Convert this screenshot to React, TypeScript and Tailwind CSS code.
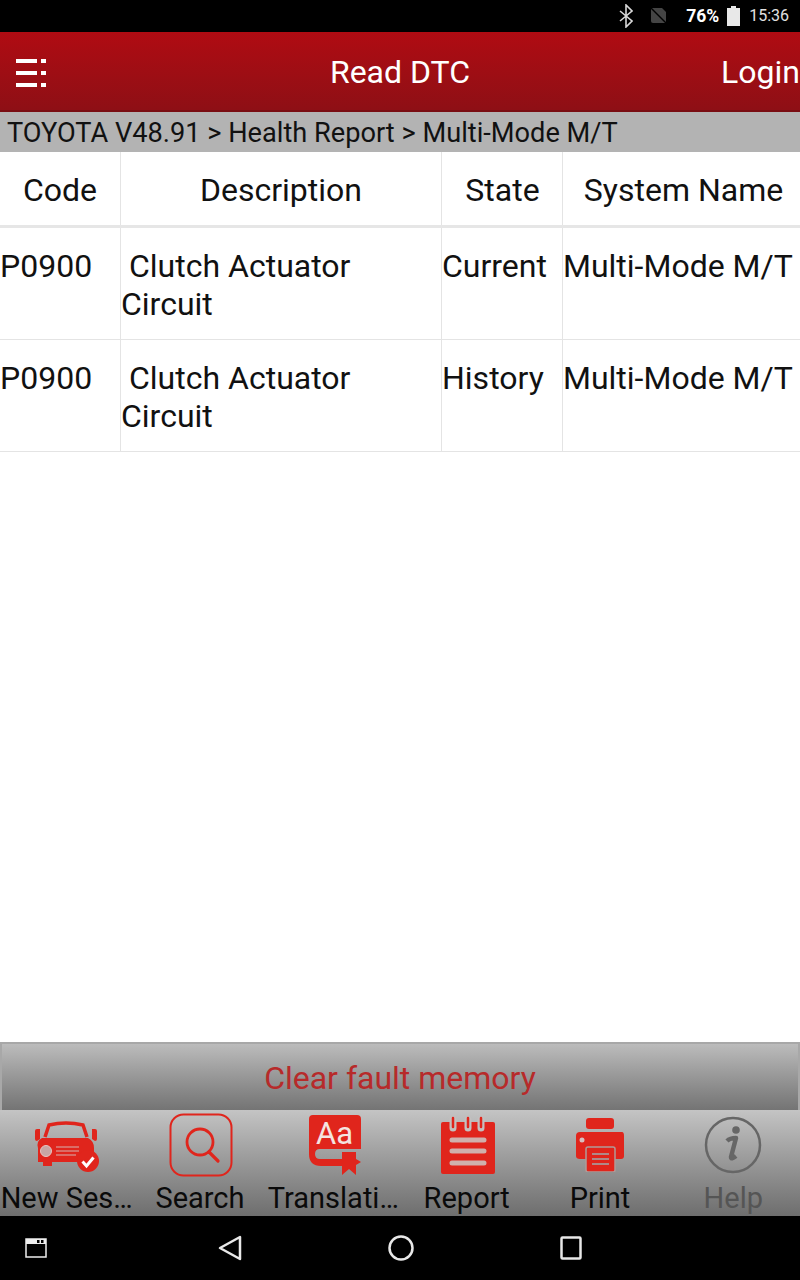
import { ReactNode } from "react";

const RED = "#e0251c";

const ROWS = [
  { code: "P0900", state: "Current" },
  { code: "P0900", state: "History" },
];

const CarIcon = () => (
  <svg width="66" height="54" viewBox="0 0 66 54">
    <path d="M11 19 L15 7 Q32 3 49 7 L53 19" fill="none" stroke={RED} strokeWidth="3.500" />
    <path d="M1 13q0-2 2-2h3v10l-3 2q-2 0-2-2zM58 11h3q2 0 2 2v8q0 2-2 2l-3-2z" fill={RED} />
    <path d="M8 20 H54 Q60 23 60 30 V44 H18 V48 H9 V44 H4 V30 Q2 23 8 20Z" fill={RED} />
    <circle cx="12" cy="33" r="5.500" fill="#c8a6a4" stroke="#e9c4c0" strokeWidth="1" />
    <path d="M22 29H45M22 33H45M22 37H42" stroke="#d6b4b0" strokeWidth="1.200" />
    <circle cx="54" cy="43" r="11" fill={RED} />
    <path d="M48.500 43.500l4 4.500 7-8.500" fill="none" stroke="#fff" strokeWidth="3" />
  </svg>
);

const SearchIcon = () => (
  <svg width="64" height="64" viewBox="0 0 64 64">
    <rect x="1.500" y="1.500" width="61" height="61" rx="13" fill="none" stroke={RED} strokeWidth="2" />
    <circle cx="31" cy="29" r="13" fill="none" stroke={RED} strokeWidth="2.800" />
    <path d="M40 39l9 9" stroke={RED} strokeWidth="3.200" strokeLinecap="round" />
  </svg>
);

const TranslateIcon = () => (
  <svg width="52" height="60" viewBox="0 0 52 60">
    <path d="M4 0H48Q52 0 52 4V34H11Q6 34 6 39T11 44H33V51H12Q0 51 0 39V4Q0 0 4 0Z" fill={RED} />
    <path d="M33 37H47V60L40 54L33 60Z" fill={RED} />
    <path d="M47 44l5 3l-5 3z" fill={RED} />
    <text x="7" y="29" fontFamily="Roboto, sans-serif" fontSize="31" fill="#f4e4e0">Aa</text>
  </svg>
);

const ReportIcon = () => (
  <svg width="54" height="58" viewBox="0 0 54 58">
    <path d="M2 6H52Q54 6 54 8V56Q54 58 52 58H2Q0 58 0 56V8Q0 6 2 6Z" fill={RED} />
    <path d="M12 4v8M27 4v8M40 4v8" stroke="#c4c0bf" strokeWidth="7" strokeLinecap="round" />
    <path d="M12 2v9M27 2v9M40 2v9" stroke={RED} strokeWidth="2.500" strokeLinecap="round" />
    <path d="M11 24H43M11 35H43M11 47H43" stroke="#d0b0ac" strokeWidth="5" strokeLinecap="round" />
  </svg>
);

const PrintIcon = () => (
  <svg width="50" height="54" viewBox="0 0 50 54">
    <rect x="10" y="0" width="28" height="11" rx="3" fill={RED} />
    <path d="M4 14H46Q48 14 48 18V38Q48 41 45 41H4Q0 41 0 38V18Q0 14 4 14Z" fill={RED} />
    <circle cx="6" cy="22" r="2.500" fill="#d8c0c0" />
    <rect x="10" y="29" width="29" height="25" rx="2" fill={RED} stroke="#b09a98" strokeWidth="1.500" />
    <path d="M16 36H33M16 41H33M16 46H33" stroke="#b08888" strokeWidth="2" />
  </svg>
);

const HelpIcon = () => (
  <svg width="58" height="58" viewBox="0 0 58 58">
    <circle cx="29" cy="29" r="27" fill="none" stroke="#666" strokeWidth="2.500" />
    <circle cx="32" cy="14" r="3.800" fill="#666" />
    <path d="M23 25q3-3 9-3l-5 19q0 3 5-1" fill="none" stroke="#666" strokeWidth="4.500" strokeLinejoin="round" />
  </svg>
);

const ToolButton = ({ icon, label, muted }: { icon: ReactNode; label: string; muted?: boolean }) => (
  <div className="flex-1 min-w-0 flex flex-col items-center pt-[2px]">
    <div className="h-[66px] flex items-center justify-center">{icon}</div>
    <span className={`mt-[3px] text-[29px] leading-[34px] whitespace-nowrap ${muted ? "text-[#555]" : "text-[#0a0a0a]"}`}>{label}</span>
  </div>
);

const Cell = ({ w, children, last }: { w: string; children: ReactNode; last?: boolean }) => (
  <div className={`${w} shrink-0 min-w-0 ${last ? "" : "border-r border-[#e4e4e4]"}`}>{children}</div>
);

export default function App() {
  return (
    <div className="w-[800px] h-[1280px] flex flex-col bg-white overflow-hidden font-['Roboto',sans-serif] text-[#111]">
      {/* Status bar */}
      <div className="h-[32px] shrink-0 bg-black flex items-center justify-end pr-[11px] text-[#e0e0e0]">
        <svg width="14" height="24" viewBox="0 0 14 24" className="mr-[17px]">
          <path d="M1 7l12 10-6 6V1l6 6L1 17" fill="none" stroke="#d8d8d8" strokeWidth="1.600" />
        </svg>
        <svg width="18" height="18" viewBox="0 0 18 18" className="mr-[18px]">
          <path d="M1 1H12L16 5V16H3Q1 16 1 14Z" fill="#444" />
          <path d="M1 1L17 17" stroke="#000" strokeWidth="1.500" />
        </svg>
        <span className="text-[17.500px] font-bold text-white mr-[8px]">76%</span>
        <svg width="13" height="20" viewBox="0 0 13 20" className="mr-[9px]">
          <path d="M4 0H9V2H13V20H0V2H4Z" fill="#e8e8e8" />
        </svg>
        <span className="text-[16px]">15:36</span>
      </div>

      {/* Title bar */}
      <div className="h-[80px] shrink-0 relative flex items-center justify-center pt-[2px] bg-gradient-to-b from-[#b00b12] to-[#8e0f15] border-b-2 border-[#7a0d12] text-white">
        <svg width="30" height="30" viewBox="0 0 30 30" className="absolute left-[16px] top-[26px]">
          <path d="M0 1H21V5H0ZM25 1H30V5H25ZM0 13H21V17H0ZM25 13H30V17H25ZM0 25H21V29H0ZM25 25H30V29H25Z" fill="#fff" />
        </svg>
        <span className="text-[32px]">Read DTC</span>
        <span className="absolute right-0 text-[32px]">Login</span>
      </div>

      {/* Breadcrumb */}
      <div className="h-[40px] shrink-0 bg-[#b3b3b3] pl-[7px] text-[27.2px] leading-[42px] text-[#111] whitespace-nowrap">
        TOYOTA V48.91 &gt; Health Report &gt; Multi-Mode M/T
      </div>

      {/* Table */}
      <div className="h-[76px] shrink-0 flex text-center text-[32px] leading-[76px] border-b-[3px] border-[#e6e6e6]">
        <Cell w="w-[121px]">Code</Cell>
        <Cell w="w-[321px]">Description</Cell>
        <Cell w="w-[121px] pl-[1px]">State</Cell>
        <Cell w="flex-1 pl-[4px]" last>System Name</Cell>
      </div>
      {ROWS.map((row) => (
        <div key={row.state} className="h-[112px] shrink-0 flex text-[32px] leading-[38px] border-b border-[#e4e4e4]">
          <Cell w="w-[121px] pt-[19px]">{row.code}</Cell>
          <Cell w="w-[321px] pt-[19px]">
            <span className="pl-[8px]">Clutch Actuator</span>
            <br />
            Circuit
          </Cell>
          <Cell w="w-[121px] pt-[19px]">{row.state}</Cell>
          <Cell w="flex-1 pt-[19px] whitespace-nowrap" last>Multi-Mode M/T</Cell>
        </div>
      ))}
      <div className="flex-1" />

      {/* Clear button */}
      <div className="h-[68px] shrink-0 flex items-center justify-center pt-[2px] bg-gradient-to-b from-[#bcbcbc] to-[#747474] border-t-2 border-x-2 border-[#a8a8a8] border-b-0 text-[32px] text-[#b72a2a]">
        Clear fault memory
      </div>

      {/* Toolbar */}
      <div className="h-[106px] shrink-0 flex bg-gradient-to-b from-[#c4c4c4] to-[#6e6e6e]">
        <ToolButton icon={<CarIcon />} label="New Ses…" />
        <ToolButton icon={<div className="pl-[2px]"><SearchIcon /></div>} label="Search" />
        <ToolButton icon={<div className="pl-[4px]"><TranslateIcon /></div>} label="Translati…" />
        <ToolButton icon={<div className="pl-[2px]"><ReportIcon /></div>} label="Report" />
        <ToolButton icon={<div className="pl-[2px]"><PrintIcon /></div>} label="Print" />
        <ToolButton icon={<HelpIcon />} label="Help" muted />
      </div>

      {/* Navigation bar */}
      <div className="h-[64px] shrink-0 bg-black flex items-center pl-[25px]">
        <svg width="22" height="22" viewBox="0 0 22 22">
          <rect x="1" y="2" width="20" height="18" fill="none" stroke="#eee" strokeWidth="1.500" />
          <rect x="1" y="2" width="20" height="5" fill="#eee" />
          <rect x="12" y="3" width="2.500" height="3" fill="#000" />
          <rect x="16" y="3" width="2.500" height="3" fill="#000" />
        </svg>
        <svg width="24" height="26" viewBox="0 0 24 26" className="ml-[171px]">
          <path d="M22 2V24L2 13Z" fill="none" stroke="#e8e8e8" strokeWidth="2.500" strokeLinejoin="round" />
        </svg>
        <svg width="26" height="26" viewBox="0 0 26 26" className="ml-[146px]">
          <circle cx="13" cy="13" r="11.500" fill="none" stroke="#e8e8e8" strokeWidth="2.500" />
        </svg>
        <svg width="22" height="24" viewBox="0 0 22 24" className="ml-[146px]">
          <rect x="1.500" y="1.500" width="19" height="21" rx="1" fill="none" stroke="#e8e8e8" strokeWidth="2.500" />
        </svg>
      </div>
    </div>
  );
}
